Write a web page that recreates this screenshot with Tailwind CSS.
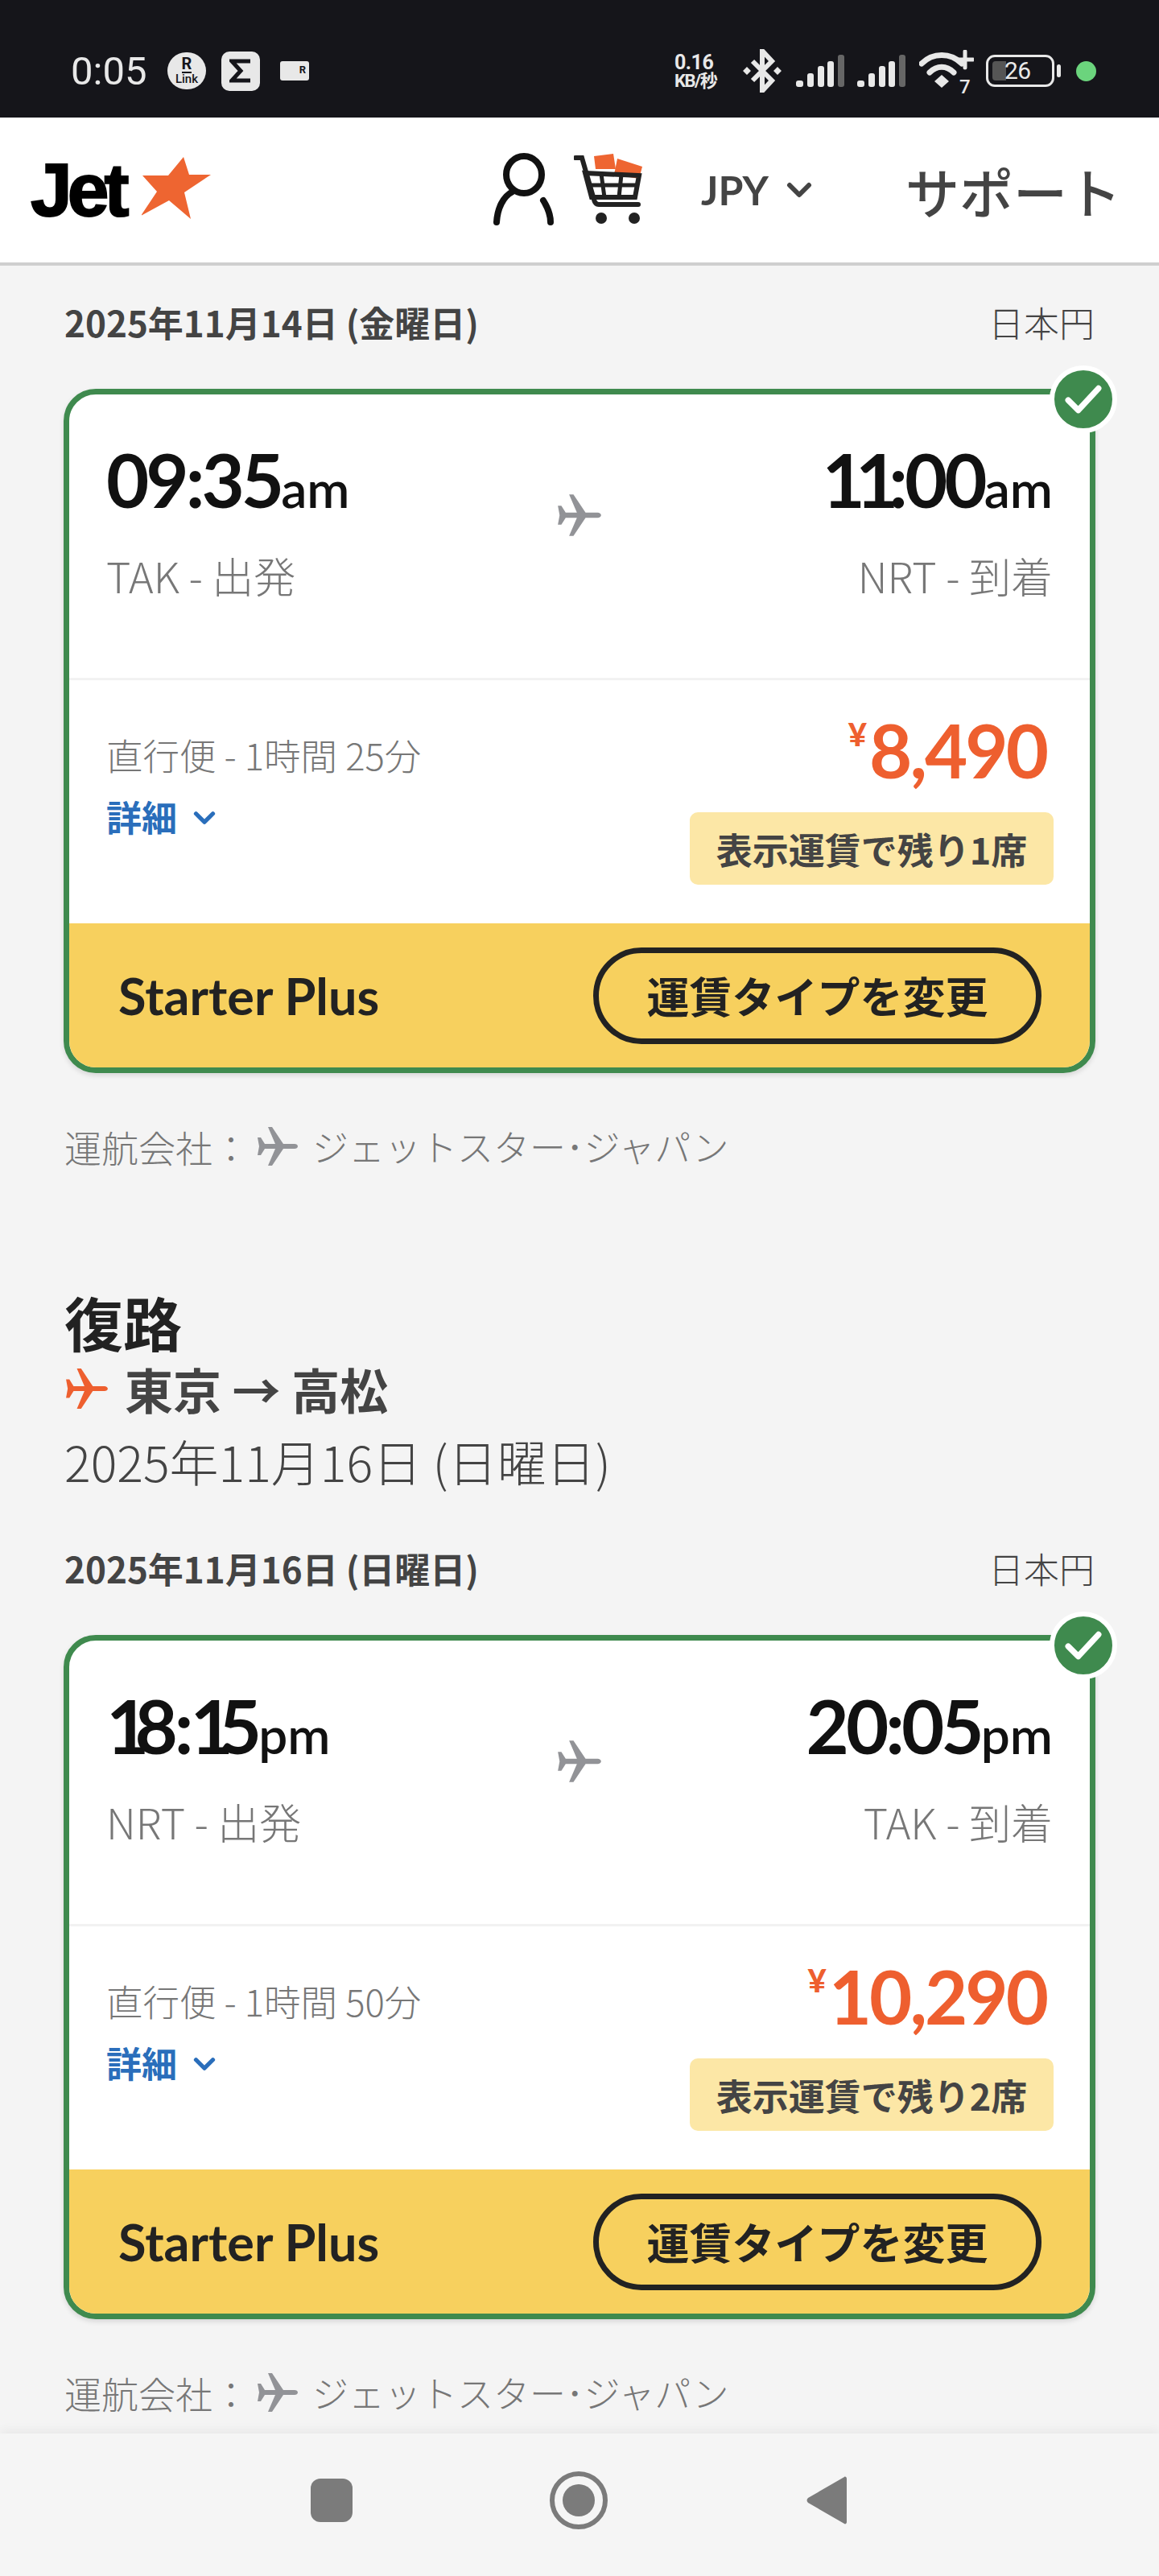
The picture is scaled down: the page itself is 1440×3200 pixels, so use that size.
<!DOCTYPE html>
<html>
<head>
    <meta charset="utf-8">
    <script src="https://cdn.jsdelivr.net/npm/@tailwindcss/browser@4"></script>
</head>
<body class="bg-[#f4f4f4] font-['Noto_Sans_CJK_JP',sans-serif]">
<div class="w-[1440px] h-[3200px] overflow-hidden flex flex-col">

    <!-- status bar -->
    <div class="h-[146px] pt-[30px] bg-[#15151a] flex items-center text-[#e8e8e8] shrink-0">
        <span class="ml-[88px] w-[95px] font-['Roboto',sans-serif] text-[49px] leading-none">0:05</span>
        <div class="ml-[25px] w-[48px] h-[46px] rounded-full bg-[#e8e8e8] text-[#15151a] flex flex-col items-center justify-center font-['Roboto',sans-serif] leading-none">
            <span class="text-[20px] font-bold border-b-2 border-[#15151a] leading-[19px]">R</span>
            <span class="text-[15px] font-medium">Link</span>
        </div>
        <div class="ml-[19px] w-[48px] h-[49px] rounded-[10px] bg-[#e8e8e8] flex items-center justify-center">
            <svg width="28" height="32" viewBox="0 0 28 32"><path d="M26 4H3l11 12L3 28h23" fill="none" stroke="#15151a" stroke-width="5"/></svg>
        </div>
        <div class="ml-[25px] w-[36px] h-[24px] rounded-[3px] bg-[#e8e8e8] flex justify-end pr-[4px] text-[#15151a] text-[13px] leading-[22px] font-['Roboto',sans-serif] font-bold">R</div>

        <div class="ml-[454px] w-[70px] flex flex-col font-['Roboto',sans-serif] font-bold leading-none">
            <span class="text-[25px] tracking-[-0.5px]">0.16</span>
            <span class="text-[22px] tracking-[-1.5px] font-['Roboto','Noto_Sans_CJK_JP',sans-serif]">KB/秒</span>
        </div>
        <svg class="ml-[15px]" width="48" height="54" viewBox="0 0 48 54">
            <path d="M12 15l24 24-12 13V2l12 13-24 24" fill="none" stroke="#e8e8e8" stroke-width="6"/>
            <path d="M0 27l5-5 5 5-5 5zM38 27l5-5 5 5-5 5z" fill="#e8e8e8"/>
        </svg>
        <svg class="ml-[18px]" width="60" height="40" viewBox="0 0 60 40">
            <rect x="0" y="32" width="9" height="8" rx="3" fill="#e8e8e8"/><rect x="14" y="23" width="8" height="17" rx="3" fill="#e8e8e8"/><rect x="27" y="14" width="8" height="26" rx="3" fill="#e8e8e8"/><rect x="39" y="8" width="8" height="32" rx="3" fill="#e8e8e8"/><rect x="52" y="0" width="8" height="40" rx="3" fill="#666"/>
        </svg>
        <svg class="ml-[16px]" width="60" height="40" viewBox="0 0 60 40">
            <rect x="0" y="32" width="9" height="8" rx="3" fill="#e8e8e8"/><rect x="14" y="23" width="8" height="17" rx="3" fill="#e8e8e8"/><rect x="27" y="14" width="8" height="26" rx="3" fill="#e8e8e8"/><rect x="39" y="8" width="8" height="32" rx="3" fill="#e8e8e8"/><rect x="52" y="0" width="8" height="40" rx="3" fill="#666"/>
        </svg>
        <div class="relative ml-[17px] w-[68px] h-[52px]">
            <svg width="68" height="52" viewBox="0 0 68 52">
                <path d="M3 17c14-14 36-14 50 0" fill="none" stroke="#e8e8e8" stroke-width="7" stroke-linecap="round"/>
                <path d="M13 28c9-9 21-9 30 0" fill="none" stroke="#e8e8e8" stroke-width="7" stroke-linecap="round"/>
                <path d="M28 31l9 8-9 8-9-8z" fill="#e8e8e8"/>
                <path d="M57 2v20M48 12h19" stroke="#e8e8e8" stroke-width="5" stroke-linecap="round"/>
            </svg>
            <span class="absolute left-[50px] top-[34px] text-[24px] leading-none font-['Roboto',sans-serif] font-medium">7</span>
        </div>
        <div class="ml-[15px] w-[85px] h-[40px] rounded-[11px] border-[3px] border-[#e8e8e8] p-[5px] relative flex items-center">
            <div class="w-[17px] h-full rounded-l-[4px] bg-[#555]"></div>
            <span class="absolute left-[20px] top-0 font-['Roboto',sans-serif] text-[30px] leading-[34px] tracking-[-0.5px]">26</span>
        </div>
        <div class="ml-[3px] w-[5px] h-[16px] rounded-full bg-[#e8e8e8]"></div>
        <div class="ml-[19px] w-[25px] h-[25px] rounded-full bg-[#6bd47d]"></div>
    </div>

    <!-- header -->
    <div class="h-[184px] bg-white shrink-0 flex items-center border-b-[4px] border-[#cfcfcf]">
        <div class="ml-[38px] flex items-center">
            <span class="font-['Liberation_Sans',sans-serif] font-bold text-[93px] leading-none tracking-[-6px] text-black [-webkit-text-stroke:2px_#000] w-[138px]">Jet</span>
            <svg width="87" height="80" viewBox="175 197 87 80" class="-mt-[4px]">
                <path d="M227 198l7 22h27l-33 22 8 33-27-23-35 19 20-30-18-20h32z" fill="#ee6531"/>
            </svg>
        </div>
        <svg class="ml-[345px]" width="84" height="92" viewBox="610 190 84 92">
            <ellipse cx="653" cy="217" rx="22" ry="23" fill="none" stroke="#111" stroke-width="8"/>
            <path d="M639 238c-12 6-19 21-20 38M677 249c5 8 9 18 9 27" fill="none" stroke="#111" stroke-width="8" stroke-linecap="round"/>
        </svg>
        <svg class="ml-[21px]" width="88" height="92" viewBox="714 190 88 92">
            <path d="M739 194l24-3 3 19-25 0z" fill="#ee6531"/><path d="M768 197l31 10-4 15-31-5z" fill="#ee6531"/>
            <path d="M716 196h8l15 52c1 4 3 6 6 6h49" fill="none" stroke="#222" stroke-width="6" stroke-linecap="round"/>
            <path d="M728 215l67 3-5 27h-54z" fill="none" stroke="#222" stroke-width="6"/>
            <path d="M730 230h62M748 216l4 29M773 217l-3 28" stroke="#222" stroke-width="5"/>
            <circle cx="748" cy="271" r="7" fill="#222"/><circle cx="789" cy="271" r="7" fill="#222"/>
        </svg>
        <span class="ml-[70px] text-[#444] text-[50px] font-bold leading-none font-['Lato',sans-serif] w-[84px]">JPY</span>
        <svg class="ml-[22px]" width="32" height="20" viewBox="0 0 32 20"><path d="M4 4l12 12L28 4" fill="none" stroke="#444" stroke-width="6" stroke-linecap="round" stroke-linejoin="round"/></svg>
        <span class="ml-[116px] text-[#444] text-[67px] font-medium leading-none whitespace-nowrap">サポート</span>
    </div>

    <!-- content -->
    <div class="flex-1 overflow-hidden">

        <!-- outbound -->
        <div class="mt-[39px] mx-[80px] flex justify-between items-center h-[62px]">
            <span class="text-[44px] font-bold text-[#444] leading-none">2025年11月14日 (金曜日)</span>
            <span class="text-[44px] text-[#444] leading-none font-light">日本円</span>
        </div>
        <div class="relative mt-[52px] ml-[79px] w-[1282px]">
            <div class="rounded-[40px] border-[7px] border-[#3f8a4e] overflow-hidden bg-white shadow-[0_3px_6px_rgba(0,0,0,0.12)]">
                <div class="h-[355px] px-[46px] flex justify-between border-b-[3px] border-[#f2f2f2]">
                    <div class="flex-1 pt-[56px]">
                        <div class="font-['Lato',sans-serif] font-bold text-[#111] leading-[100px] text-[92px] tracking-[-4px] whitespace-nowrap">09:35<span class="text-[64px] tracking-normal font-semibold">am</span></div>
                        <div class="mt-[23px] text-[52px] leading-[70px] text-[#777] font-light whitespace-nowrap">TAK - 出発</div>
                    </div>
                    <svg class="mt-[124px]" width="58" height="52" viewBox="0 0 54 48"><path d="M52 24c0-1.700-2-3-4-3H34L20 0h-5l9 21H11L6 13H2l2 11-2 11h4l5-8h13l-9 21h5l14-21h14c2 0 4-1.300 4-3z" fill="#929397"/></svg>
                    <div class="flex-1 pt-[56px] text-right">
                        <div class="font-['Lato',sans-serif] font-bold text-[#111] leading-[100px] text-[92px] tracking-[-4px] whitespace-nowrap"><span class="tracking-[-12px]">11</span>:00<span class="text-[64px] tracking-normal font-semibold">am</span></div>
                        <div class="mt-[23px] text-[52px] leading-[70px] text-[#777] font-light whitespace-nowrap">NRT - 到着</div>
                    </div>
                </div>
                <div class="h-[302px] pl-[46px] pr-[45px] flex justify-between">
                    <div class="pt-[62px]">
                        <div class="text-[45.500px] leading-[60px] text-[#777] font-light whitespace-nowrap">直行便 - 1時間 25分</div>
                        <div class="mt-[17px] flex items-center text-[44px] font-bold leading-[60px] text-[#2a6ebb]">詳細
                            <svg class="ml-[20px] mt-[4px]" width="28" height="18" viewBox="0 0 32 20"><path d="M4 4l12 12L28 4" fill="none" stroke="#2a6ebb" stroke-width="6" stroke-linecap="round" stroke-linejoin="round"/></svg>
                        </div>
                    </div>
                    <div class="pt-[32px] flex flex-col items-end">
                        <div class="mr-[9px] flex items-start font-['Lato',sans-serif] font-bold text-[#ee5f2f] text-[92px] leading-[110px] tracking-[-3px]"><span class="text-[40px] font-black leading-[70px] mr-[6px]">¥</span>8,490</div>
                        <div class="mt-[22px] w-[452px] h-[90px] rounded-[10px] bg-[#fce7a6] flex items-center justify-center text-[45px] font-bold text-[#444] leading-none whitespace-nowrap">表示運賃で残り1席</div>
                    </div>
                </div>
                <div class="h-[179px] bg-[#f7d05e] pl-[61px] pr-[60px] flex items-center justify-between">
                    <span class="font-['Lato',sans-serif] font-bold text-[63px] text-[#222] leading-none whitespace-nowrap">Starter Plus</span>
                    <div class="w-[557px] h-[120px] rounded-full border-[7px] border-[#222] flex items-center justify-center text-[53px] font-bold text-[#222] leading-none whitespace-nowrap">運賃タイプを変更</div>
                </div>
            </div>
            <!-- selected badge -->
            <div class="absolute left-[1225px] -top-[29px] w-[84px] h-[84px] rounded-full bg-[#3f8a4e] border-[6px] border-white flex items-center justify-center">
                <svg width="46" height="38" viewBox="0 0 44 36"><path d="M4 19l12 12L40 5" fill="none" stroke="white" stroke-width="7" stroke-linecap="round" stroke-linejoin="round"/></svg>
            </div>
        </div>
        <div class="mt-[61px] ml-[80px] flex items-center h-[60px] text-[46px] text-[#777] font-light whitespace-nowrap">
            <span class="w-[238px]">運航会社：</span>
            <svg width="54" height="48" viewBox="0 0 54 48"><path d="M52 24c0-1.700-2-3-4-3H34L20 0h-5l9 21H11L6 13H2l2 11-2 11h4l5-8h13l-9 21h5l14-21h14c2 0 4-1.300 4-3z" fill="#929397"/></svg>
            <span class="ml-[16px] text-[45px]">ジェットスター･ジャパン</span>
        </div>

        <!-- return -->
        <div class="mt-[142px] ml-[80px] text-[73px] font-bold leading-[90px] text-[#222]">復路</div>
        <div class="ml-[80px] flex items-center h-[78px] text-[#444] text-[60px] font-bold leading-none whitespace-nowrap">
            <svg width="56" height="50" viewBox="0 0 54 48"><path d="M52 24c0-1.700-2-3-4-3H34L20 0h-5l9 21H11L6 13H2l2 11-2 11h4l5-8h13l-9 21h5l14-21h14c2 0 4-1.300 4-3z" fill="#ee5f2f"/></svg>
            <span class="ml-[19px]">東京 → 高松</span>
        </div>
        <div class="ml-[80px] mt-[8px] h-[84px] flex items-center text-[61px] text-[#444] font-light leading-none whitespace-nowrap">2025年11月16日 (日曜日)</div>

        <div class="mt-[61px] mx-[80px] flex justify-between items-center h-[62px]">
            <span class="text-[44px] font-bold text-[#444] leading-none">2025年11月16日 (日曜日)</span>
            <span class="text-[44px] text-[#444] leading-none font-light">日本円</span>
        </div>
        <div class="relative mt-[52px] ml-[79px] w-[1282px]">
            <div class="rounded-[40px] border-[7px] border-[#3f8a4e] overflow-hidden bg-white shadow-[0_3px_6px_rgba(0,0,0,0.12)]">
                <div class="h-[355px] px-[46px] flex justify-between border-b-[3px] border-[#f2f2f2]">
                    <div class="flex-1 pt-[56px]">
                        <div class="font-['Lato',sans-serif] font-bold text-[#111] leading-[100px] text-[92px] tracking-[-4px] whitespace-nowrap"><span class="tracking-[-18px]">1</span>8:<span class="tracking-[-18px]">1</span>5<span class="text-[64px] tracking-normal font-semibold">pm</span></div>
                        <div class="mt-[23px] text-[52px] leading-[70px] text-[#777] font-light whitespace-nowrap">NRT - 出発</div>
                    </div>
                    <svg class="mt-[124px]" width="58" height="52" viewBox="0 0 54 48"><path d="M52 24c0-1.700-2-3-4-3H34L20 0h-5l9 21H11L6 13H2l2 11-2 11h4l5-8h13l-9 21h5l14-21h14c2 0 4-1.300 4-3z" fill="#929397"/></svg>
                    <div class="flex-1 pt-[56px] text-right">
                        <div class="font-['Lato',sans-serif] font-bold text-[#111] leading-[100px] text-[92px] tracking-[-4px] whitespace-nowrap">20:05<span class="text-[64px] tracking-normal font-semibold">pm</span></div>
                        <div class="mt-[23px] text-[52px] leading-[70px] text-[#777] font-light whitespace-nowrap">TAK - 到着</div>
                    </div>
                </div>
                <div class="h-[302px] pl-[46px] pr-[45px] flex justify-between">
                    <div class="pt-[62px]">
                        <div class="text-[45.500px] leading-[60px] text-[#777] font-light whitespace-nowrap">直行便 - 1時間 50分</div>
                        <div class="mt-[17px] flex items-center text-[44px] font-bold leading-[60px] text-[#2a6ebb]">詳細
                            <svg class="ml-[20px] mt-[4px]" width="28" height="18" viewBox="0 0 32 20"><path d="M4 4l12 12L28 4" fill="none" stroke="#2a6ebb" stroke-width="6" stroke-linecap="round" stroke-linejoin="round"/></svg>
                        </div>
                    </div>
                    <div class="pt-[32px] flex flex-col items-end">
                        <div class="mr-[9px] flex items-start font-['Lato',sans-serif] font-bold text-[#ee5f2f] text-[92px] leading-[110px] tracking-[-3px]"><span class="text-[40px] font-black leading-[70px] mr-[6px]">¥</span>10,290</div>
                        <div class="mt-[22px] w-[452px] h-[90px] rounded-[10px] bg-[#fce7a6] flex items-center justify-center text-[45px] font-bold text-[#444] leading-none whitespace-nowrap">表示運賃で残り2席</div>
                    </div>
                </div>
                <div class="h-[179px] bg-[#f7d05e] pl-[61px] pr-[60px] flex items-center justify-between">
                    <span class="font-['Lato',sans-serif] font-bold text-[63px] text-[#222] leading-none whitespace-nowrap">Starter Plus</span>
                    <div class="w-[557px] h-[120px] rounded-full border-[7px] border-[#222] flex items-center justify-center text-[53px] font-bold text-[#222] leading-none whitespace-nowrap">運賃タイプを変更</div>
                </div>
            </div>
            <div class="absolute left-[1225px] -top-[29px] w-[84px] h-[84px] rounded-full bg-[#3f8a4e] border-[6px] border-white flex items-center justify-center">
                <svg width="46" height="38" viewBox="0 0 44 36"><path d="M4 19l12 12L40 5" fill="none" stroke="white" stroke-width="7" stroke-linecap="round" stroke-linejoin="round"/></svg>
            </div>
        </div>
        <div class="mt-[61px] ml-[80px] flex items-center h-[60px] text-[46px] text-[#777] font-light whitespace-nowrap">
            <span class="w-[238px]">運航会社：</span>
            <svg width="54" height="48" viewBox="0 0 54 48"><path d="M52 24c0-1.700-2-3-4-3H34L20 0h-5l9 21H11L6 13H2l2 11-2 11h4l5-8h13l-9 21h5l14-21h14c2 0 4-1.300 4-3z" fill="#929397"/></svg>
            <span class="ml-[16px] text-[45px]">ジェットスター･ジャパン</span>
        </div>
    </div>

    <!-- android nav -->
    <div class="h-[177px] shrink-0 bg-[#f5f5f5] shadow-[0_-4px_12px_rgba(0,0,0,0.05)] flex items-center pb-[11px]">
        <div class="ml-[386px] w-[52px] h-[54px] rounded-[12px] bg-[#7b7b7b]"></div>
        <div class="ml-[245px] w-[72px] h-[72px] rounded-full border-[6px] border-[#7b7b7b] flex items-center justify-center">
            <div class="w-[40px] h-[40px] rounded-full bg-[#7b7b7b]"></div>
        </div>
        <svg class="ml-[247px]" width="50" height="62" viewBox="0 0 50 62"><path d="M47 2c1-1 3 0 3 2v54c0 2-2 3-3 2L2 34c-2-2-2-4 0-6z" fill="#7b7b7b"/></svg>
    </div>
</div>
</body>
</html>
